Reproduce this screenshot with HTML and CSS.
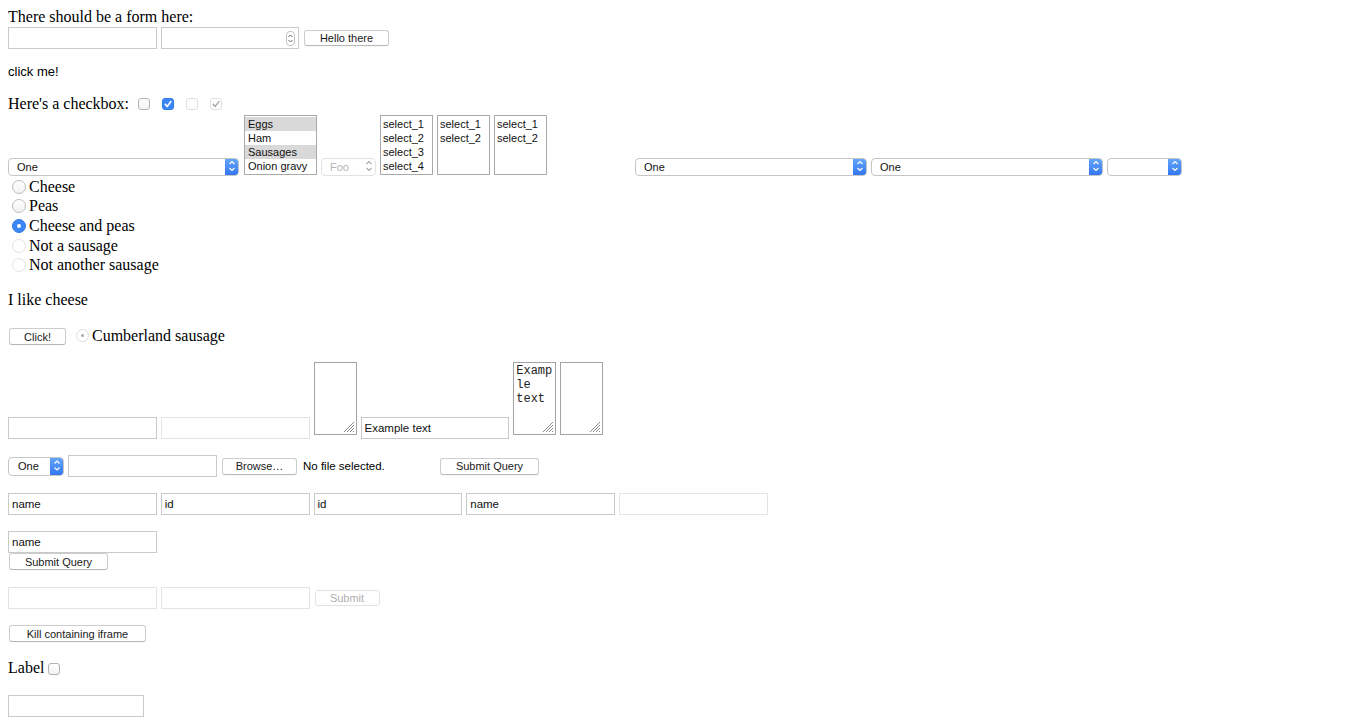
FILE: index.html
```html
<!DOCTYPE html>
<html>
<head>
<meta charset="utf-8">
<title>We Leave From Here</title>
<link rel="stylesheet" href="styles.css">
</head>
<body>
<div class="line">There should be a form here:</div>

<div class="row r1">
  <span class="tf w149"></span>
  <span class="tf num"><span class="spin"><svg width="9" height="15" viewBox="0 0 9 15"><path d="M2.5 6 L4.5 4 L6.5 6 M2.5 9 L4.5 11 L6.5 9" fill="none" stroke="#666" stroke-width="1"/></svg></span></span>
  <span class="btn b-hello">Hello there</span>
</div>

<div class="click">click me!</div>

<div class="row checkrow">
  <span class="lbl">Here's a checkbox:</span>
  <span class="cb first"></span>
  <span class="cb on"><svg width="12" height="12" viewBox="0 0 12 12"><path d="M3.2 6.3 L5.2 8.4 L8.9 3.6" fill="none" stroke="#fff" stroke-width="1.6" stroke-linecap="round" stroke-linejoin="round"/></svg></span>
  <span class="cb dis"></span>
  <span class="cb dis"><svg width="12" height="12" viewBox="0 0 12 12"><path d="M3.2 6.3 L5.2 8.4 L8.9 3.6" fill="none" stroke="#a8a8a8" stroke-width="1.5" stroke-linecap="round" stroke-linejoin="round"/></svg></span>
</div>

<div class="row selrow">
  <span class="sel s-231"><span class="sv">One</span><span class="arr"><svg width="14" height="18" viewBox="0 0 14 18"><path d="M4.5 7 L7 4.5 L9.5 7 M4.5 11 L7 13.5 L9.5 11" fill="none" stroke="#fff" stroke-width="1.2"/></svg></span></span>
  <span class="list l-food">
    <span class="opt hl">Eggs</span>
    <span class="opt">Ham</span>
    <span class="opt hl">Sausages</span>
    <span class="opt">Onion gravy</span>
  </span>
  <span class="sel s-foo dsel"><span class="sv">Foo</span><span class="arr grey"><svg width="14" height="18" viewBox="0 0 14 18"><path d="M4.5 7 L7 4.5 L9.5 7 M4.5 11 L7 13.5 L9.5 11" fill="none" stroke="#aaa" stroke-width="1.1"/></svg></span></span>
  <span class="list l-sel">
    <span class="opt">select_1</span>
    <span class="opt">select_2</span>
    <span class="opt">select_3</span>
    <span class="opt">select_4</span>
  </span>
  <span class="list l-sel">
    <span class="opt">select_1</span>
    <span class="opt">select_2</span>
  </span>
  <span class="list l-sel">
    <span class="opt">select_1</span>
    <span class="opt">select_2</span>
  </span>
  <span class="sel s-232 far"><span class="sv">One</span><span class="arr"><svg width="14" height="18" viewBox="0 0 14 18"><path d="M4.5 7 L7 4.5 L9.5 7 M4.5 11 L7 13.5 L9.5 11" fill="none" stroke="#fff" stroke-width="1.2"/></svg></span></span>
  <span class="sel s-232"><span class="sv">One</span><span class="arr"><svg width="14" height="18" viewBox="0 0 14 18"><path d="M4.5 7 L7 4.5 L9.5 7 M4.5 11 L7 13.5 L9.5 11" fill="none" stroke="#fff" stroke-width="1.2"/></svg></span></span>
  <span class="sel s-75"><span class="sv"></span><span class="arr"><svg width="14" height="18" viewBox="0 0 14 18"><path d="M4.5 7 L7 4.5 L9.5 7 M4.5 11 L7 13.5 L9.5 11" fill="none" stroke="#fff" stroke-width="1.2"/></svg></span></span>
</div>

<div class="radios">
  <div class="rrow h19"><span class="rd"></span>Cheese</div>
  <div class="rrow h20"><span class="rd"></span>Peas</div>
  <div class="rrow h20"><span class="rd on"></span>Cheese and peas</div>
  <div class="rrow h19"><span class="rd dis"></span>Not a sausage</div>
  <div class="rrow h20"><span class="rd dis"></span>Not another sausage</div>
</div>

<div class="line cheese">I like cheese</div>

<div class="row clickrow">
  <span class="btn b-click">Click!</span>
  <span class="rd sm dis-on"></span>
  <span class="cumb">Cumberland sausage</span>
</div>

<div class="row tarow">
  <span class="tf"></span>
  <span class="tf dis"></span>
  <span class="ta"><span class="grip"><svg width="12" height="12" viewBox="0 0 12 12"><path d="M1 11 L11 1 M4 11 L11 4 M7 11 L11 7 M10 11 L11 10" stroke="#8c8c8c" stroke-width="1"/></svg></span></span>
  <span class="tf txt">Example text</span>
  <span class="ta mono">Examp<br>le<br>text<span class="grip"><svg width="12" height="12" viewBox="0 0 12 12"><path d="M1 11 L11 1 M4 11 L11 4 M7 11 L11 7 M10 11 L11 10" stroke="#8c8c8c" stroke-width="1"/></svg></span></span>
  <span class="ta"><span class="grip"><svg width="12" height="12" viewBox="0 0 12 12"><path d="M1 11 L11 1 M4 11 L11 4 M7 11 L11 7 M10 11 L11 10" stroke="#8c8c8c" stroke-width="1"/></svg></span></span>
</div>

<div class="row filerow">
  <span class="sel s-one"><span class="sv">One</span><span class="arr"><svg width="14" height="19" viewBox="0 0 14 19"><path d="M4.5 7.5 L7 5 L9.5 7.5 M4.5 11.5 L7 14 L9.5 11.5" fill="none" stroke="#fff" stroke-width="1.2"/></svg></span></span>
  <span class="tf f-in"></span>
  <span class="btn b-browse">Browse…</span>
  <span class="nofile">No file selected.</span>
  <span class="btn b-submit">Submit Query</span>
</div>

<div class="row idrow">
  <span class="tf txt">name</span>
  <span class="tf txt">id</span>
  <span class="tf txt">id</span>
  <span class="tf txt">name</span>
  <span class="tf dis"></span>
</div>

<div class="namebox">
  <span class="tf txt w149">name</span>
</div>
<div class="subrow"><span class="btn b-sq">Submit Query</span></div>

<div class="row disrow">
  <span class="tf dis"></span>
  <span class="tf dis"></span>
  <span class="btn b-dsub">Submit</span>
</div>

<div class="killrow"><span class="btn b-kill">Kill containing iframe</span></div>

<div class="row labelrow">
  <span class="lbl">Label</span>
  <span class="cb lab"></span>
</div>

<div class="lastrow"><span class="tf last"></span></div>
</body>
</html>
```

FILE: styles.css
```css
html, body {
  background: #ffffff;
}
body {
  margin: 8px;
  font-family: "Liberation Serif", "Times New Roman", serif;
  font-size: 16px;
  color: #000;
}
.line {
  height: 18px;
  line-height: 18px;
  white-space: nowrap;
}
.row {
  display: flex;
  white-space: nowrap;
}

/* text fields */
.tf {
  display: inline-flex;
  align-items: center;
  box-sizing: border-box;
  width: 148.75px;
  height: 22px;
  border: 1px solid #c9c9c9;
  background: #fff;
  font-family: "Liberation Sans", Arial, sans-serif;
  font-size: 11.5px;
  color: #111;
  padding-left: 3px;
  position: relative;
  flex: none;
}
.tf.w149 {
  width: 149px;
}
.tf + .tf, .tf + .ta, .ta + .tf, .ta + .ta {
  margin-left: 4px;
}
.tf.dis {
  border-color: #e4e4e4;
}
.num {
  width: 138px;
  justify-content: flex-end;
  padding-right: 3px;
}
.spin {
  display: block;
  width: 9px;
  height: 15px;
  border: 1px solid #c4c4c4;
  border-radius: 4px;
  box-sizing: border-box;
  position: relative;
}
.spin svg {
  position: absolute;
  left: -1px;
  top: -1px;
}

/* buttons */
.btn {
  display: inline-flex;
  align-items: center;
  justify-content: center;
  box-sizing: border-box;
  height: 17px;
  border: 1px solid #cdcdcd;
  border-bottom-color: #b9b9b9;
  border-radius: 3px;
  background: #fff;
  box-shadow: 0 0.5px 0.5px rgba(0,0,0,0.06);
  font-family: "Liberation Sans", Arial, sans-serif;
  font-size: 11px;
  color: #1a1a1a;
  flex: none;
}

.r1 {
  margin-top: 1px;
  height: 22px;
  align-items: center;
}
.b-hello {
  width: 85px;
  height: 16px;
  margin-left: 5px;
}

.click {
  margin-top: 15px;
  height: 15px;
  line-height: 15px;
  font-family: "Liberation Sans", Arial, sans-serif;
  font-size: 13px;
}

/* checkboxes */
.checkrow {
  margin-top: 16px;
  height: 18px;
  align-items: center;
  line-height: 18px;
}
.cb {
  display: inline-block;
  box-sizing: border-box;
  width: 12px;
  height: 12px;
  border: 1px solid #b3b3b3;
  border-radius: 3px;
  background: linear-gradient(#ffffff, #f3f3f3);
  margin-left: 12px;
  position: relative;
  flex: none;
}
.cb.first {
  margin-left: 9px;
}
.cb svg {
  position: absolute;
  left: -1px;
  top: -1px;
}
.cb.on {
  background: #3b87f6;
  border-color: #3179e8;
}
.cb.dis {
  border-color: #e0e0e0;
  background: #fff;
}

/* selects */
.selrow {
  margin-top: 2px;
  height: 61px;
  align-items: flex-end;
}
.sel {
  display: inline-flex;
  align-items: center;
  justify-content: space-between;
  box-sizing: border-box;
  height: 18px;
  border: 1px solid #c6c6c6;
  border-radius: 4px;
  background: #fff;
  font-family: "Liberation Sans", Arial, sans-serif;
  font-size: 11px;
  color: #111;
  overflow: hidden;
  flex: none;
}
.sv {
  padding-left: 8px;
}
.arr {
  display: block;
  width: 14px;
  height: 18px;
  margin-right: -1px;
  background: linear-gradient(#66a7fa, #2f74ef);
  border-radius: 0 4px 4px 0;
  flex: none;
}
.arr svg {
  display: block;
  margin-top: -1px;
}
.arr.grey {
  background: none;
}
.s-231 { width: 231px; }
.s-232 { width: 232px; margin-left: 4px; }
.s-232.far { margin-left: 88px; }
.s-75 { width: 75px; margin-left: 4px; }
.s-foo { width: 55px; margin-left: 4px; border-color: #e2e2e2; }
.dsel { color: #b4b4b4; }
.list {
  display: inline-flex;
  flex-direction: column;
  box-sizing: border-box;
  height: 60px;
  border: 1px solid #a9a9a9;
  background: #fff;
  margin-bottom: 1px;
  padding-top: 1px;
  font-family: "Liberation Sans", Arial, sans-serif;
  font-size: 11px;
  color: #111;
  flex: none;
}
.l-food {
  width: 73px;
  margin-left: 5px;
}
.l-sel {
  width: 53px;
  margin-left: 4px;
}
.opt {
  display: block;
  height: 14px;
  line-height: 14px;
  padding-left: 3px;
}
.l-sel .opt {
  padding-left: 2px;
}
.opt.hl {
  background: #d9d9d9;
}

/* radios */
.radios {
  margin-top: 1px;
}
.rrow {
  display: flex;
  align-items: center;
  line-height: 18px;
  white-space: nowrap;
}
.h19 { height: 19px; }
.h20 { height: 20px; }
.rd {
  display: inline-block;
  box-sizing: border-box;
  width: 14px;
  height: 14px;
  border: 1px solid #bdbdbd;
  border-radius: 50%;
  background: linear-gradient(#ffffff, #f1f1f1);
  margin: 0 3px 0 4px;
  position: relative;
  flex: none;
}
.rd.on {
  background: #3b87f6;
  border-color: #3179e8;
}
.rd.on::after {
  content: "";
  position: absolute;
  left: 4px;
  top: 4px;
  width: 4px;
  height: 4px;
  border-radius: 50%;
  background: #fff;
}
.rd.dis {
  border-color: #e3e3e3;
  background: #fff;
}

.cheese {
  margin-top: 16px;
}

.clickrow {
  margin-top: 16px;
  height: 22px;
  align-items: flex-start;
}
.b-click {
  width: 57px;
  margin-left: 1px;
  margin-top: 3px;
}
.rd.sm {
  width: 13px;
  height: 13px;
  margin: 4px 3px 0 10px;
}
.rd.dis-on {
  border-color: #dedede;
  background: #fff;
}
.rd.dis-on::after {
  content: "";
  position: absolute;
  left: 4px;
  top: 4px;
  width: 3px;
  height: 3px;
  border-radius: 50%;
  background: #a9a9a9;
}
.cumb {
  line-height: 18px;
  margin-top: 2px;
}

/* textarea row */
.tarow {
  margin-top: 15px;
  height: 77px;
  align-items: flex-end;
}
.ta {
  display: block;
  box-sizing: border-box;
  width: 43px;
  height: 73px;
  border: 1px solid #a3a3a3;
  background: #fff;
  margin-bottom: 4px;
  position: relative;
  flex: none;
}
.ta.mono {
  font-family: "Liberation Mono", "Courier New", monospace;
  font-size: 12px;
  line-height: 14px;
  padding: 1px 0 0 2px;
  color: #222;
}
.grip {
  position: absolute;
  right: 1px;
  bottom: 1px;
  width: 12px;
  height: 12px;
}
.grip svg {
  display: block;
}

/* file row */
.filerow {
  margin-top: 16px;
  height: 22px;
  align-items: center;
}
.s-one {
  width: 56px;
  height: 19px;
}
.s-one .sv { padding-left: 9px; }
.s-one .arr { height: 19px; }
.tf.f-in {
  width: 149px;
  margin-left: 4px;
}
.b-browse {
  width: 75px;
  margin-left: 5px;
}
.nofile {
  font-family: "Liberation Sans", Arial, sans-serif;
  font-size: 11.5px;
  margin-left: 6px;
  width: 137px;
}
.b-submit {
  width: 99px;
}

.idrow {
  margin-top: 16px;
  height: 22px;
}
.namebox {
  margin-top: 16px;
  height: 22px;
  display: flex;
}
.subrow {
  height: 17px;
  display: flex;
}
.b-sq {
  width: 99px;
  margin-left: 1px;
}

.disrow {
  margin-top: 17px;
  height: 22px;
  align-items: center;
}
.b-dsub {
  width: 65px;
  height: 16px;
  margin-left: 5px;
  color: #b0b0b0;
  border-color: #e2e2e2;
  box-shadow: none;
}

.killrow {
  margin-top: 16px;
  height: 17px;
  display: flex;
}
.b-kill {
  width: 137px;
  margin-left: 1px;
}

.labelrow {
  margin-top: 17px;
  height: 18px;
  line-height: 18px;
  align-items: center;
}
.cb.lab {
  margin-left: 4px;
  margin-top: 2px;
}

.lastrow {
  margin-top: 18px;
  display: flex;
}
.tf.last {
  width: 136px;
}
```
